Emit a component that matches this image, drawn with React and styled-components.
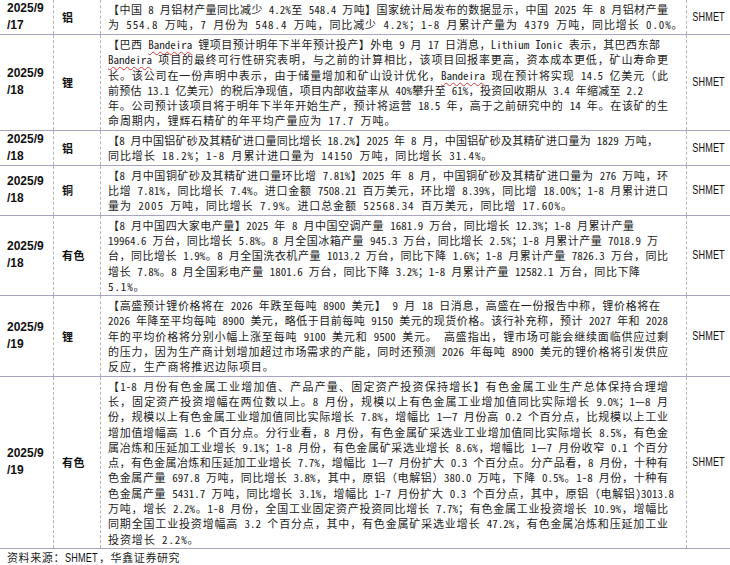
import React from 'react'
import styled, { createGlobalStyle } from 'styled-components'

const CJK = '"Noto Sans Mono CJK SC", "Noto Sans CJK SC", "Noto Sans", sans-serif'

const GlobalStyle = createGlobalStyle`
  html, body {
    margin: 0;
    padding: 0;
    background: #ffffff;
  }
  body {
    font-family: ${CJK};
    color: #222222;
    text-autospace: no-autospace;
  }
`

const Page = styled.div`
  width: 730px;
`

const Table = styled.div`
  display: flex;
  flex-direction: column;
`

const Row = styled.div`
  display: grid;
  grid-template-columns: 54px 47px 586px 1fr;
  border-bottom: 1px solid #a9a5bf;
`

const DateCell = styled.div`
  display: flex;
  flex-direction: column;
  justify-content: center;
  padding-left: 7px;
  border-right: 1px dashed #b4b4b4;
  font-family: 'Liberation Sans', Arial, sans-serif;
  font-weight: 700;
  font-size: 12px;
  line-height: 17px;
  color: #111;
`

const CategoryCell = styled.div`
  display: flex;
  align-items: center;
  padding-left: 8px;
  border-right: 1px dashed #b4b4b4;
  font-family: ${CJK};
  font-weight: 700;
  font-size: 11px;
  letter-spacing: 0.5px;
  color: #111;
`

const ContentCell = styled.div`
  padding: 2px 18px 1px 7px;
  border-right: 1px dashed #b4b4b4;
`

const Line = styled.div`
  width: ${p => (p.$w ? `${p.$w}px` : 'auto')};
  font-size: 11px;
  line-height: 15.3px;
  letter-spacing: ${p => (p.$last ? '0.9px' : '0')};
  white-space: nowrap;
  text-align: justify;
  text-align-last: ${p => (p.$last ? 'left' : 'justify')};
  text-justify: inter-character;
`

const Misspelled = styled.span`
  text-decoration: underline wavy #d83a3a;
  text-decoration-thickness: 1px;
  text-underline-offset: 2px;
`

const SourceCell = styled.div`
  display: flex;
  align-items: center;
  justify-content: center;
`

const Narrow = styled.span`
  display: inline-block;
  font-family: 'Liberation Sans', Arial, sans-serif;
  font-size: 12px;
  letter-spacing: 0.2px;
  color: #111;
  transform: scaleX(0.76);
  transform-origin: ${p => (p.$left ? 'left center' : 'center')};
  margin-right: ${p => (p.$left ? '-9px' : '0')};
`

const Footer = styled.div`
  padding: 1px 0 0 7px;
  font-size: 11px;
  line-height: 15px;
  letter-spacing: 0.6px;
`

// [text, justified width] — width given only where the source line breaks short
const rows = [
  {
    date: ['2025/9', '/17'],
    cat: '铝',
    lines: [
      ['【中国 8 月铝材产量同比减少 4.2%至 548.4 万吨】国家统计局发布的数据显示，中国 2025 年 8 月铝材产量'],
      ['为 554.8 万吨，7 月份为 548.4 万吨，同比减少 4.2%；1-8 月累计产量为 4379 万吨，同比增长 0.0%。'],
    ],
  },
  {
    date: ['2025/9', '/18'],
    cat: '锂',
    lines: [
      ['【巴西 Bandeira 锂项目预计明年下半年预计投产】外电 9 月 17 日消息，Lithium Ionic 表示，其巴西东部', 552],
      ['Bandeira 项目的最终可行性研究表明，与之前的计算相比，该项目回报率更高，资本成本更低，矿山寿命更'],
      ['长。该公司在一份声明中表示，由于储量增加和矿山设计优化，Bandeira 现在预计将实现 14.5 亿美元（此'],
      ['前预估 13.1 亿美元）的税后净现值，项目内部收益率从 40%攀升至 61%，投资回收期从 3.4 年缩减至 2.2', 535],
      ['年。公司预计该项目将于明年下半年开始生产，预计将运营 18.5 年，高于之前研究中的 14 年。在该矿的生'],
      ['命周期内，锂辉石精矿的年平均产量应为 17.7 万吨。'],
    ],
  },
  {
    date: ['2025/9', '/18'],
    cat: '铝',
    lines: [
      ['【8 月中国铝矿砂及其精矿进口量同比增长 18.2%】2025 年 8 月，中国铝矿砂及其精矿进口量为 1829 万吨，', 550],
      ['同比增长 18.2%；1-8 月累计进口量为 14150 万吨，同比增长 31.4%。'],
    ],
  },
  {
    date: ['2025/9', '/18'],
    cat: '铜',
    lines: [
      ['【8 月中国铜矿砂及其精矿进口量环比增 7.81%】2025 年 8 月，中国铜矿砂及其精矿进口量为 276 万吨，环'],
      ['比增 7.81%，同比增长 7.4%。进口金额 7508.21 百万美元，环比增 8.39%，同比增 18.00%；1-8 月累计进口'],
      ['量为 2005 万吨，同比增长 7.9%。进口总金额 52568.34 百万美元，同比增 17.60%。'],
    ],
  },
  {
    date: ['2025/9', '/18'],
    cat: '有色',
    lines: [
      ['【8 月中国四大家电产量】2025 年 8 月中国空调产量 1681.9 万台，同比增长 12.3%；1-8 月累计产量', 526],
      ['19964.6 万台，同比增长 5.8%。8 月全国冰箱产量 945.3 万台，同比增长 2.5%；1-8 月累计产量 7018.9 万', 550],
      ['台，同比增长 1.9%。8 月全国洗衣机产量 1013.2 万台，同比下降 1.6%；1-8 月累计产量 7826.3 万台，同比'],
      ['增长 7.8%。8 月全国彩电产量 1801.6 万台，同比下降 3.2%；1-8 月累计产量 12582.1 万台，同比下降', 532],
      ['5.1%。'],
    ],
  },
  {
    date: ['2025/9', '/19'],
    cat: '锂',
    lines: [
      ['【高盛预计锂价格将在 2026 年跌至每吨 8900 美元】 9 月 18 日消息，高盛在一份报告中称，锂价格将在', 552],
      ['2026 年降至平均每吨 8900 美元，略低于目前每吨 9150 美元的现货价格。该行补充称，预计 2027 年和 2028'],
      ['年的平均价格将分别小幅上涨至每吨 9100 美元和 9500 美元。 高盛指出，锂市场可能会继续面临供应过剩'],
      ['的压力，因为生产商计划增加超过市场需求的产能，同时还预测 2026 年每吨 8900 美元的锂价格将引发供应'],
      ['反应，生产商将推迟边际项目。'],
    ],
  },
  {
    date: ['2025/9', '/19'],
    cat: '有色',
    lines: [
      ['【1-8 月份有色金属工业增加值、产品产量、固定资产投资保持增长】有色金属工业生产总体保持合理增'],
      ['长，固定资产投资增幅在两位数以上。8 月份，规模以上有色金属工业增加值同比实际增长 9.0%；1—8 月'],
      ['份，规模以上有色金属工业增加值同比实际增长 7.8%，增幅比 1—7 月份高 0.2 个百分点，比规模以上工业'],
      ['增加值增幅高 1.6 个百分点。分行业看，8 月份，有色金属矿采选业工业增加值同比实际增长 8.5%，有色金'],
      ['属冶炼和压延加工业增长 9.1%；1-8 月份，有色金属矿采选业增长 8.6%，增幅比 1—7 月份收窄 0.1 个百分'],
      ['点，有色金属冶炼和压延加工业增长 7.7%，增幅比 1—7 月份扩大 0.3 个百分点。分产品看，8 月份，十种有'],
      ['色金属产量 697.8 万吨，同比增长 3.8%，其中，原铝（电解铝）380.0 万吨，下降 0.5%。1-8 月份，十种有'],
      ['色金属产量 5431.7 万吨，同比增长 3.1%，增幅比 1-7 月份扩大 0.3 个百分点，其中，原铝（电解铝)3013.8', 566],
      ['万吨，增长 2.2%。1-8 月份，全国工业固定资产投资同比增长 7.7%；有色金属工业投资增长 10.9%，增幅比'],
      ['同期全国工业投资增幅高 3.2 个百分点，其中，有色金属矿采选业增长 47.2%，有色金属冶炼和压延加工业'],
      ['投资增长 2.2%。'],
    ],
  },
]

const renderText = text =>
  text.split(/(Bandeira)/).map((part, i) =>
    part === 'Bandeira' ? <Misspelled key={i}>{part}</Misspelled> : part
  )

export default function App() {
  return (
    <Page>
      <GlobalStyle />
      <Table>
        {rows.map((row, r) => (
          <Row key={r}>
            <DateCell>
              {row.date.map(d => (
                <span key={d}>{d}</span>
              ))}
            </DateCell>
            <CategoryCell>{row.cat}</CategoryCell>
            <ContentCell>
              {row.lines.map(([text, w], i) => {
                const last = i === row.lines.length - 1
                return (
                  <Line key={i} $last={last} $w={last ? null : w || 560}>
                    {renderText(text)}
                  </Line>
                )
              })}
            </ContentCell>
            <SourceCell>
              <Narrow>SHMET</Narrow>
            </SourceCell>
          </Row>
        ))}
      </Table>
      <Footer>
        资料来源：<Narrow $left>SHMET</Narrow>，华鑫证券研究
      </Footer>
    </Page>
  )
}
